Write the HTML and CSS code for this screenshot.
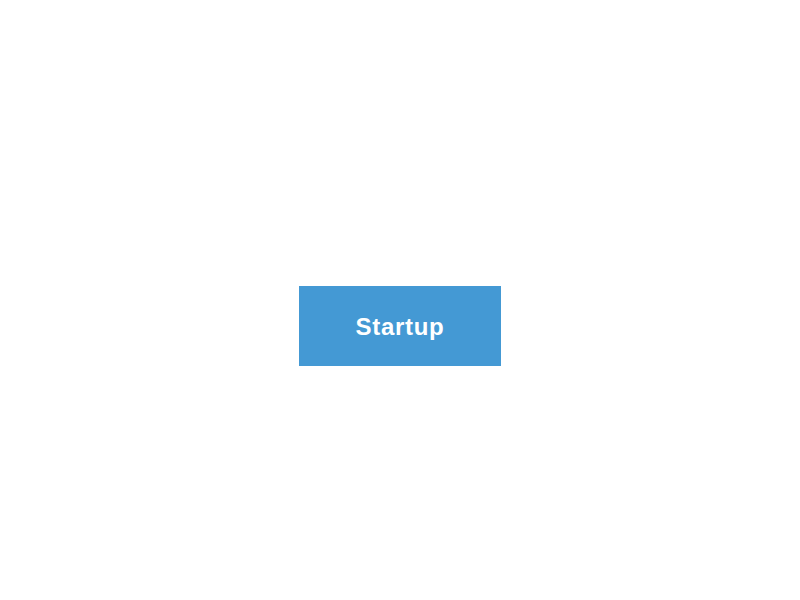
FILE: index.html
```html
<!DOCTYPE html>
<html>
<head>
<meta charset="utf-8">
<link rel="stylesheet" href="styles.css">
</head>
<body>
<div class="page">
  <button class="startup">Startup</button>
</div>
</body>
</html>
```
FILE: styles.css
```css
html, body {
  margin: 0;
  padding: 0;
  background: #ffffff;
}
.page {
  width: 800px;
  height: 600px;
  display: flex;
  align-items: center;
  justify-content: center;
}
.startup {
  width: 202px;
  height: 80px;
  margin-top: 52px;
  border: none;
  border-radius: 0;
  background: #4499d4;
  color: #ffffff;
  font-family: "Liberation Sans", Arial, sans-serif;
  font-weight: bold;
  font-size: 24px;
  letter-spacing: 0.7px;
  padding: 1px 0 0 0;
}
```
